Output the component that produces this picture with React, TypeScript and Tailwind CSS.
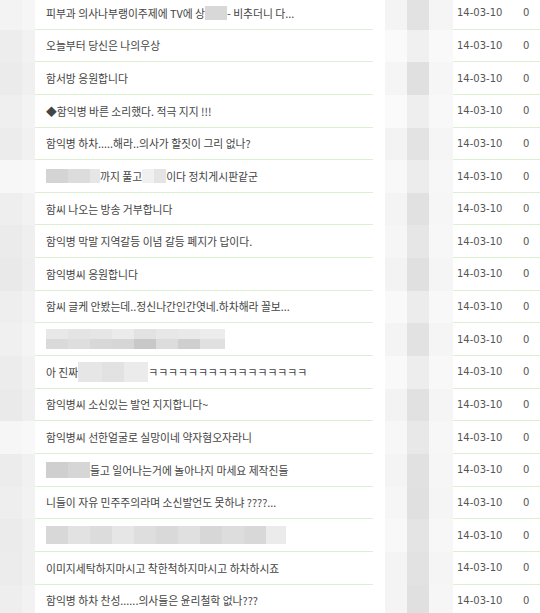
import React from 'react'

type Seg = string | { blur: string[]; w: number[]; h?: number; rows?: string[][] }

interface Post {
  title: Seg[]
  left: [string, string]
  author: [string, string, string]
}

const posts: Post[] = [
  {
    title: ['피부과 의사나부랭이주제에 TV에 상', { blur: ['bg-[#d8d8d8]'], w: [22] }, '- 비추더니 다...'],
    left: ['bg-[#f3f3f3]', 'bg-[#f6f6f6]'],
    author: ['bg-[#f4f4f4]', 'bg-[#e2e2e2]', 'bg-[#f5f5f5]'],
  },
  {
    title: ['오늘부터 당신은 나의우상'],
    left: ['bg-[#ededed]', 'bg-[#f2f2f2]'],
    author: ['bg-[#fafafa]', 'bg-[#f0f0f0]', 'bg-[#f9f9f9]'],
  },
  {
    title: ['함서방 응원합니다'],
    left: ['bg-[#ebebeb]', 'bg-[#f0f0f0]'],
    author: ['bg-[#f5f5f5]', 'bg-[#e0e0e0]', 'bg-[#f6f6f6]'],
  },
  {
    title: ['◆함익병 바른 소리했다. 적극 지지 !!!'],
    left: ['bg-[#efefef]', 'bg-[#f3f3f3]'],
    author: ['bg-[#fafafa]', 'bg-[#eeeeee]', 'bg-[#f8f8f8]'],
  },
  {
    title: ['함익병 하차.....해라..의사가 할짓이 그리 없나?'],
    left: ['bg-[#ececec]', 'bg-[#f1f1f1]'],
    author: ['bg-[#f3f3f3]', 'bg-[#e3e3e3]', 'bg-[#f5f5f5]'],
  },
  {
    title: [
      { blur: ['bg-[#d4d4d4]', 'bg-[#dcdcdc]', 'bg-[#e6e6e6]'], w: [22, 22, 10] },
      '까지 풀고 ',
      { blur: ['bg-[#f0f0f0]', 'bg-[#e4e4e4]'], w: [12, 12] },
      '이다 정치게시판같군',
    ],
    left: ['bg-[#f7f7f7]', 'bg-[#f8f8f8]'],
    author: ['bg-[#f8f8f8]', 'bg-[#ececec]', 'bg-[#f7f7f7]'],
  },
  {
    title: ['함씨 나오는 방송 거부합니다'],
    left: ['bg-[#eeeeee]', 'bg-[#f2f2f2]'],
    author: ['bg-[#f4f4f4]', 'bg-[#e1e1e1]', 'bg-[#f6f6f6]'],
  },
  {
    title: ['함익병 막말 지역갈등 이념 갈등 폐지가 답이다.'],
    left: ['bg-[#ebebeb]', 'bg-[#efefef]'],
    author: ['bg-[#f6f6f6]', 'bg-[#e6e6e6]', 'bg-[#f7f7f7]'],
  },
  {
    title: ['함익병씨 응원합니다'],
    left: ['bg-[#e9e9e9]', 'bg-[#eeeeee]'],
    author: ['bg-[#f3f3f3]', 'bg-[#e0e0e0]', 'bg-[#f5f5f5]'],
  },
  {
    title: ['함씨 글케 안봤는데..정신나간인간엿네.하차해라 꼴보...'],
    left: ['bg-[#eeeeee]', 'bg-[#f2f2f2]'],
    author: ['bg-[#f9f9f9]', 'bg-[#ececec]', 'bg-[#f8f8f8]'],
  },
  {
    title: [
      {
        blur: [],
        w: [22, 22, 22, 22, 22, 22, 22, 25],
        rows: [
          ['bg-[#e8e8e8]', 'bg-[#e4e4e4]', 'bg-[#e6e6e6]', 'bg-[#ebebeb]', 'bg-[#e2e2e2]', 'bg-[#e7e7e7]', 'bg-[#e9e9e9]', 'bg-[#ececec]'],
          ['bg-[#dadada]', 'bg-[#dedede]', 'bg-[#d8d8d8]', 'bg-[#d6d6d6]', 'bg-[#c8c8c8]', 'bg-[#dcdcdc]', 'bg-[#cfcfcf]', 'bg-[#e0e0e0]'],
        ],
      },
    ],
    left: ['bg-[#f0f0f0]', 'bg-[#f4f4f4]'],
    author: ['bg-[#f4f4f4]', 'bg-[#e2e2e2]', 'bg-[#f5f5f5]'],
  },
  {
    title: ['아 진짜', { blur: ['bg-[#e6e6e6]', 'bg-[#e2e2e2]', 'bg-[#ebebeb]'], w: [24, 22, 24], h: 20 }, 'ㅋㅋㅋㅋㅋㅋㅋㅋㅋㅋㅋㅋㅋㅋㅋㅋ'],
    left: ['bg-[#ececec]', 'bg-[#f1f1f1]'],
    author: ['bg-[#f9f9f9]', 'bg-[#ededed]', 'bg-[#f8f8f8]'],
  },
  {
    title: ['함익병씨 소신있는 발언 지지합니다~'],
    left: ['bg-[#eaeaea]', 'bg-[#efefef]'],
    author: ['bg-[#f3f3f3]', 'bg-[#e1e1e1]', 'bg-[#f5f5f5]'],
  },
  {
    title: ['함익병씨 선한얼굴로 실망이네 약자혐오자라니'],
    left: ['bg-[#f6f6f6]', 'bg-[#f8f8f8]'],
    author: ['bg-[#f7f7f7]', 'bg-[#e8e8e8]', 'bg-[#f7f7f7]'],
  },
  {
    title: [{ blur: ['bg-[#cfcfcf]', 'bg-[#d6d6d6]'], w: [22, 22], h: 16 }, '들고 일어나는거에 놀아나지 마세요 제작진들'],
    left: ['bg-[#ececec]', 'bg-[#f1f1f1]'],
    author: ['bg-[#f4f4f4]', 'bg-[#e1e1e1]', 'bg-[#f6f6f6]'],
  },
  {
    title: ['니들이 자유 민주주의라며 소신발언도 못하냐 ????...'],
    left: ['bg-[#eeeeee]', 'bg-[#f2f2f2]'],
    author: ['bg-[#f6f6f6]', 'bg-[#e0e0e0]', 'bg-[#f5f5f5]'],
  },
  {
    title: [
      {
        blur: ['bg-[#d8d8d8]', 'bg-[#e2e2e2]', 'bg-[#dcdcdc]', 'bg-[#e6e6e6]', 'bg-[#dedede]', 'bg-[#d9d9d9]', 'bg-[#e0e0e0]', 'bg-[#d7d7d7]', 'bg-[#dddddd]', 'bg-[#d8d8d8]', 'bg-[#ebebeb]'],
        w: [22, 22, 22, 22, 22, 22, 22, 22, 22, 22, 20],
        h: 18,
      },
    ],
    left: ['bg-[#ebebeb]', 'bg-[#f0f0f0]'],
    author: ['bg-[#f8f8f8]', 'bg-[#e4e4e4]', 'bg-[#f7f7f7]'],
  },
  {
    title: ['이미지세탁하지마시고 착한척하지마시고 하차하시죠'],
    left: ['bg-[#ececec]', 'bg-[#f0f0f0]'],
    author: ['bg-[#f4f4f4]', 'bg-[#e2e2e2]', 'bg-[#f5f5f5]'],
  },
  {
    title: ['함익병 하차 찬성......의사들은 윤리철학 없나???'],
    left: ['bg-[#eeeeee]', 'bg-[#f2f2f2]'],
    author: ['bg-[#f4f4f4]', 'bg-[#e0e0e0]', 'bg-[#f6f6f6]'],
  },
]

function Blur({ seg }: { seg: Exclude<Seg, string> }) {
  if (seg.rows) {
    return (
      <span className="inline-flex flex-col align-middle">
        {seg.rows.map((r, ri) => (
          <span key={ri} className="flex">
            {r.map((c, i) => (
              <span key={i} className={`${c} block h-[10px]`} style={{ width: seg.w[i] }} />
            ))}
          </span>
        ))}
      </span>
    )
  }
  return (
    <span className="inline-flex align-middle">
      {seg.blur.map((c, i) => (
        <span key={i} className={`${c} block`} style={{ width: seg.w[i], height: seg.h ?? 14 }} />
      ))}
    </span>
  )
}

export default function App() {
  return (
    <div className="w-[540px] h-[613px] overflow-hidden bg-white">
      <div className="-mt-[3px] flex flex-col">
        {posts.map((p, i) => (
          <div key={i} className="flex h-[32.65px]">
            <div className="flex w-[35px] shrink-0">
              <div className={`${p.left[0]} w-[22px]`} />
              <div className={`${p.left[1]} w-[13px]`} />
            </div>
            <div className="w-[338px] shrink-0 flex items-center pl-[11px] border-b border-[#dcefd0] text-[10.8px] text-[#444] whitespace-nowrap overflow-hidden [font-family:'Noto_Sans_CJK_KR','Noto_Sans',sans-serif]">
              {p.title.map((s, j) =>
                typeof s === 'string' ? <span key={j}>{s}</span> : <Blur key={j} seg={s} />
              )}
            </div>
            <div className="flex w-[80px] shrink-0">
              <div className="w-[12px]" />
              <div className={`${p.author[0]} w-[22px]`} />
              <div className={`${p.author[1]} w-[22px]`} />
              <div className={`${p.author[2]} w-[24px]`} />
            </div>
            <div className="flex flex-1 items-center border-b border-[#dcefd0] text-[10px] text-[#555] [font-family:'DejaVu_Sans',sans-serif]">
              <span className="w-[57px] pl-[4px]">14-03-10</span>
              <span className="pl-[13px]">0</span>
            </div>
          </div>
        ))}
      </div>
    </div>
  )
}
